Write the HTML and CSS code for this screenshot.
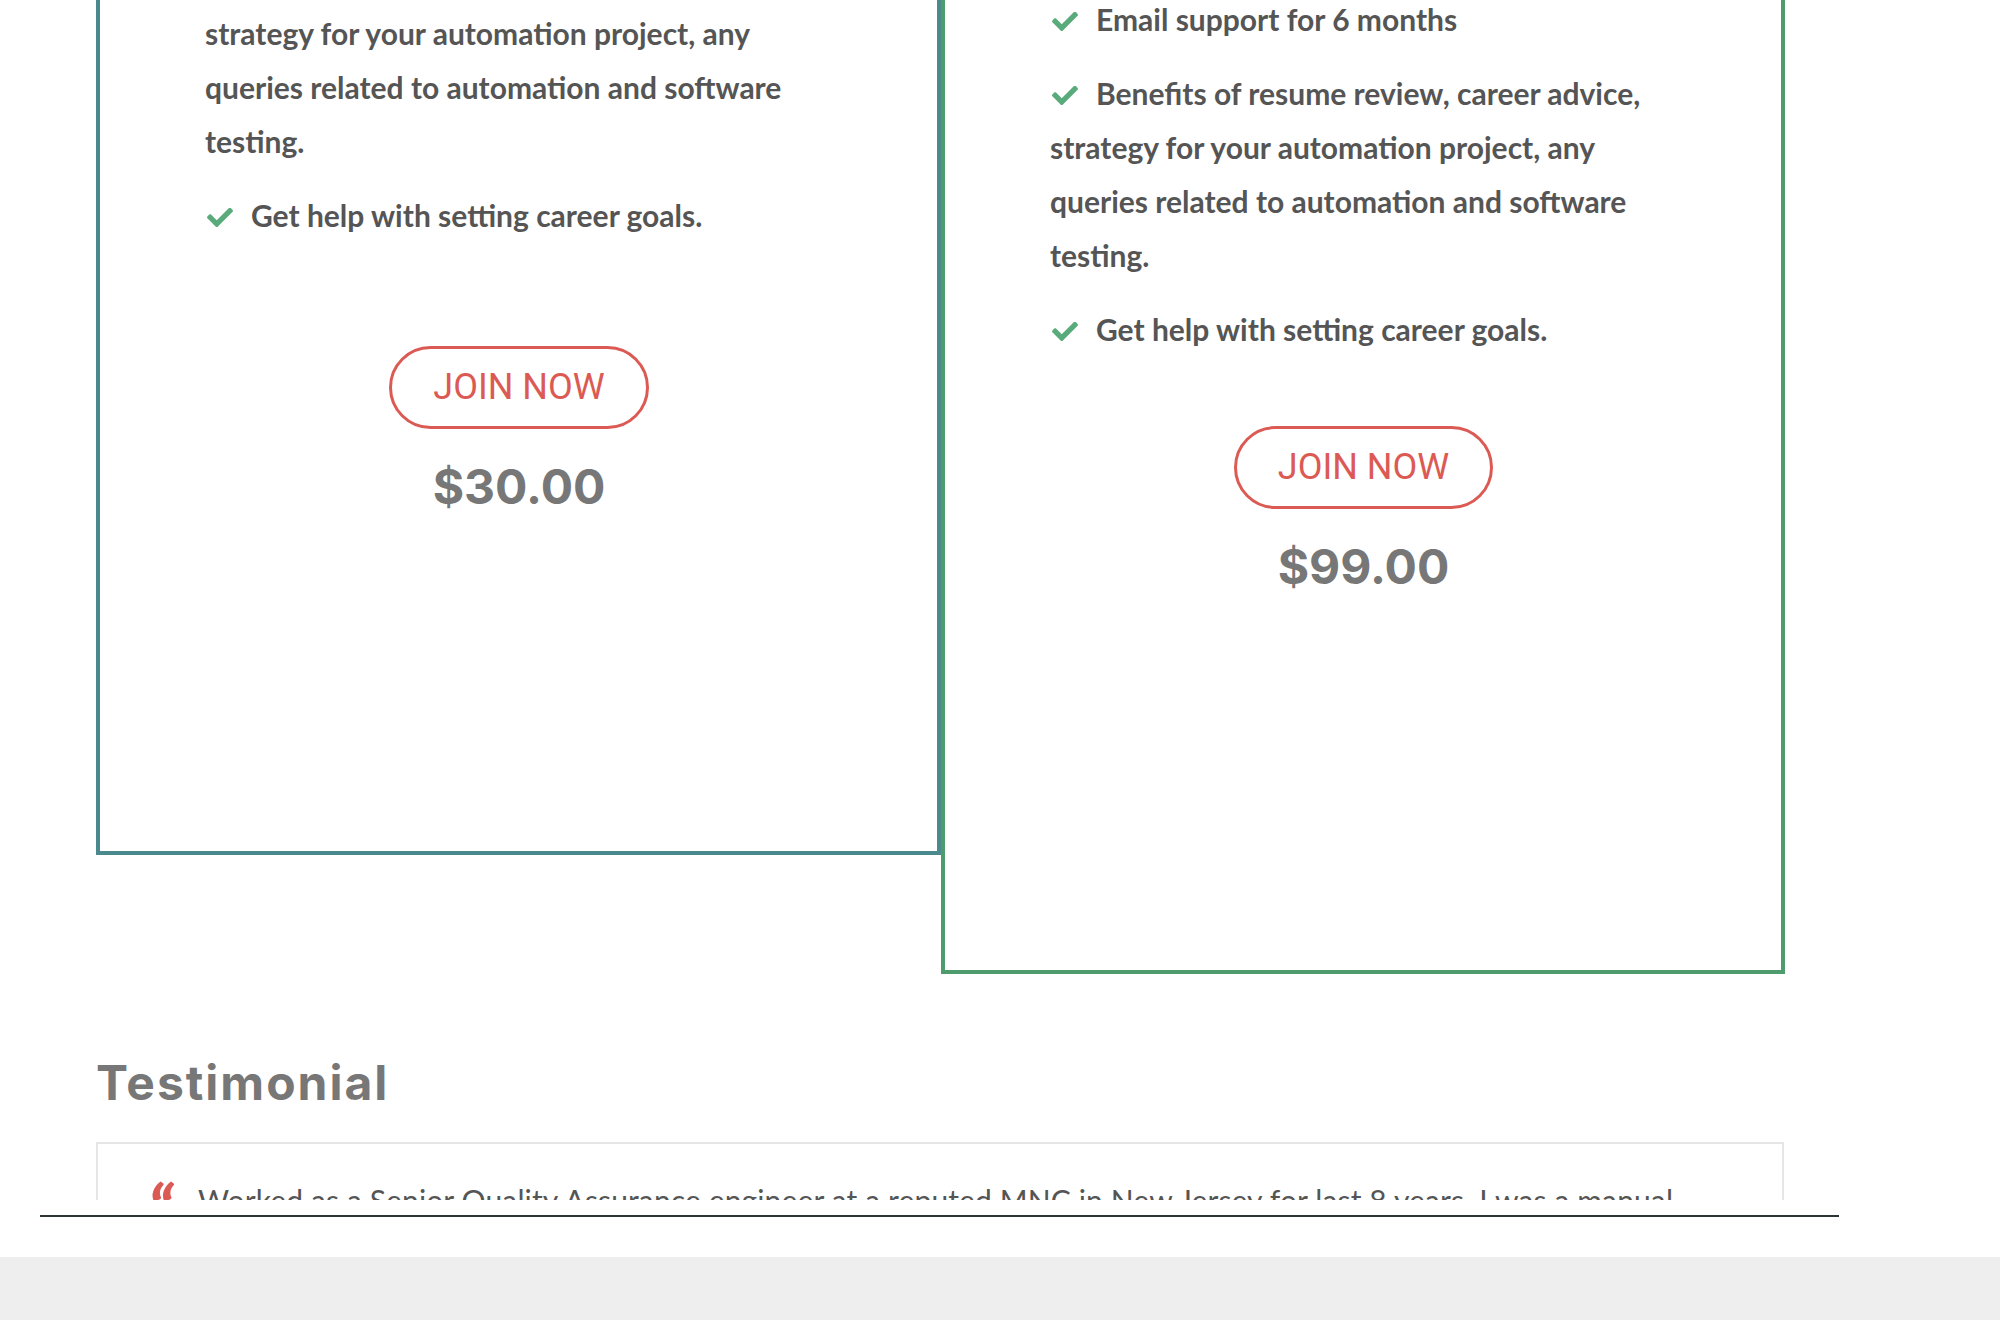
FILE: index.html
```html
<!DOCTYPE html>
<html lang="en">
<head>
<meta charset="utf-8">
<title>Pricing and Testimonial</title>
<link rel="stylesheet" href="styles.css">
</head>
<body>
<main class="page">
  <section class="pricing">
    <div class="card card-basic">
      <ul class="features">
        <li><svg class="check" viewBox="0 0 512 372" aria-hidden="true"><path d="M173.9 367.4L7.5 201c-10-10-10-26.2 0-36.2l36.2-36.2c10-10 26.2-10 36.2 0L192 240.7 432.1.6c10-10 26.2-10 36.2 0l36.2 36.2c10 10 10 26.2 0 36.2L210.1 367.4c-10 10-26.2 10-36.2 0z"/></svg>Benefits of resume review, career advice, strategy for your automation project, any queries related to automation and software testing.</li>
        <li><svg class="check" viewBox="0 0 512 372" aria-hidden="true"><path d="M173.9 367.4L7.5 201c-10-10-10-26.2 0-36.2l36.2-36.2c10-10 26.2-10 36.2 0L192 240.7 432.1.6c10-10 26.2-10 36.2 0l36.2 36.2c10 10 10 26.2 0 36.2L210.1 367.4c-10 10-26.2 10-36.2 0z"/></svg>Get help with setting career goals.</li>
      </ul>
      <div class="buy">
        <a class="join" href="#">JOIN NOW</a>
        <div class="price">$30.00</div>
      </div>
    </div>
    <div class="card card-pro">
      <ul class="features">
        <li><svg class="check" viewBox="0 0 512 372" aria-hidden="true"><path d="M173.9 367.4L7.5 201c-10-10-10-26.2 0-36.2l36.2-36.2c10-10 26.2-10 36.2 0L192 240.7 432.1.6c10-10 26.2-10 36.2 0l36.2 36.2c10 10 10 26.2 0 36.2L210.1 367.4c-10 10-26.2 10-36.2 0z"/></svg>Email support for 6 months</li>
        <li><svg class="check" viewBox="0 0 512 372" aria-hidden="true"><path d="M173.9 367.4L7.5 201c-10-10-10-26.2 0-36.2l36.2-36.2c10-10 26.2-10 36.2 0L192 240.7 432.1.6c10-10 26.2-10 36.2 0l36.2 36.2c10 10 10 26.2 0 36.2L210.1 367.4c-10 10-26.2 10-36.2 0z"/></svg>Benefits of resume review, career advice, strategy for your automation project, any queries related to automation and software testing.</li>
        <li><svg class="check" viewBox="0 0 512 372" aria-hidden="true"><path d="M173.9 367.4L7.5 201c-10-10-10-26.2 0-36.2l36.2-36.2c10-10 26.2-10 36.2 0L192 240.7 432.1.6c10-10 26.2-10 36.2 0l36.2 36.2c10 10 10 26.2 0 36.2L210.1 367.4c-10 10-26.2 10-36.2 0z"/></svg>Get help with setting career goals.</li>
      </ul>
      <div class="buy">
        <a class="join" href="#">JOIN NOW</a>
        <div class="price">$99.00</div>
      </div>
    </div>
  </section>

  <section class="testimonials">
    <h2 class="section-title">Testimonial</h2>
    <div class="slider">
      <div class="testimonial-box">
        <div class="quote">
          <span class="quote-mark">&ldquo;</span>
          <p class="quote-text">Worked as a Senior Quality Assurance engineer at a reputed MNC in New Jersey for last 8 years. I was a manual</p>
        </div>
      </div>
    </div>
  </section>

  <hr class="divider">
  <footer class="footer"></footer>
</main>
</body>
</html>
```

FILE: styles.css
```css
* { box-sizing: border-box; }

html, body {
  margin: 0;
  padding: 0;
  background: #ffffff;
}

body {
  width: 2000px;
  height: 1320px;
  overflow: hidden;
  font-family: "Lato", "Liberation Sans", sans-serif;
}

.page {
  display: flex;
  flex-direction: column;
}

/* ---------- pricing ---------- */
.pricing {
  display: flex;
  align-items: flex-start;
  margin-top: -200px;
  padding-left: 96px;
}

.card {
  background: #fff;
  border: 4px solid;
  padding-left: 105px;
  padding-right: 104px;
}

.card-basic {
  width: 845px;
  border-color: #4a8a8f;
  padding-top: 148px;
  padding-bottom: 334px;
}

.card-pro {
  width: 844px;
  border-color: #4e9b6e;
  padding-top: 188px;
  padding-bottom: 373px;
}

.features {
  list-style: none;
  margin: 0;
  padding: 0;
  font-size: 30px;
  line-height: 54px;
  font-weight: 700;
  color: #555555;
}

.features li {
  margin-bottom: 20px;
}
.features li:last-child { margin-bottom: 0; }

.check {
  display: inline-block;
  width: 26px;
  height: 19px;
  margin-left: 2px;
  margin-right: 18px;
  vertical-align: baseline;
  fill: #5aab7b;
}

.buy {
  display: flex;
  flex-direction: column;
  align-items: center;
}

.card-basic .buy { margin-top: 104px; }
.card-pro .buy { margin-top: 70px; }

.join {
  display: inline-block;
  padding: 18px 41px;
  border: 3px solid #dc5a54;
  border-radius: 50px;
  font-family: "Roboto", "Liberation Sans", sans-serif;
  font-size: 36px;
  line-height: 41px;
  font-weight: 400;
  color: #dc5a54;
  text-decoration: none;
  white-space: nowrap;
}

.price {
  margin-top: 28px;
  font-family: "Inter", "Liberation Sans", sans-serif;
  font-size: 48px;
  line-height: 60px;
  font-weight: 700;
  color: #777777;
}

/* ---------- testimonials ---------- */
.testimonials {
  padding-left: 96px;
}

.section-title {
  margin: 79px 0 29px;
  font-family: "Inter", "Liberation Sans", sans-serif;
  font-size: 48px;
  line-height: 60px;
  font-weight: 700;
  letter-spacing: 2px;
  color: #777777;
}

.slider {
  height: 58px;
  overflow: hidden;
}

.testimonial-box {
  width: 1688px;
  border: 2px solid #e6e6e6;
  padding: 32px 50px 40px 50px;
}

.quote {
  display: flex;
  align-items: flex-start;
  gap: 25px;
}

.quote-mark {
  flex: 0 0 25px;
  margin-top: 0;
  font-family: "Lato", sans-serif;
  font-size: 66px;
  line-height: 1;
  font-weight: 900;
  font-style: italic;
  color: #dc5a54;
}

.quote-text {
  margin: 0;
  font-family: "Lato", "Liberation Sans", sans-serif;
  font-size: 30px;
  line-height: 48px;
  font-weight: 400;
  letter-spacing: 0.13px;
  color: #555555;
}

/* ---------- bottom ---------- */
.divider {
  margin: 15px 161px 0 40px;
  height: 2px;
  border: 0;
  background: #2c3436;
}

.footer {
  margin-top: 40px;
  height: 80px;
  background: #eeeeee;
}
```
